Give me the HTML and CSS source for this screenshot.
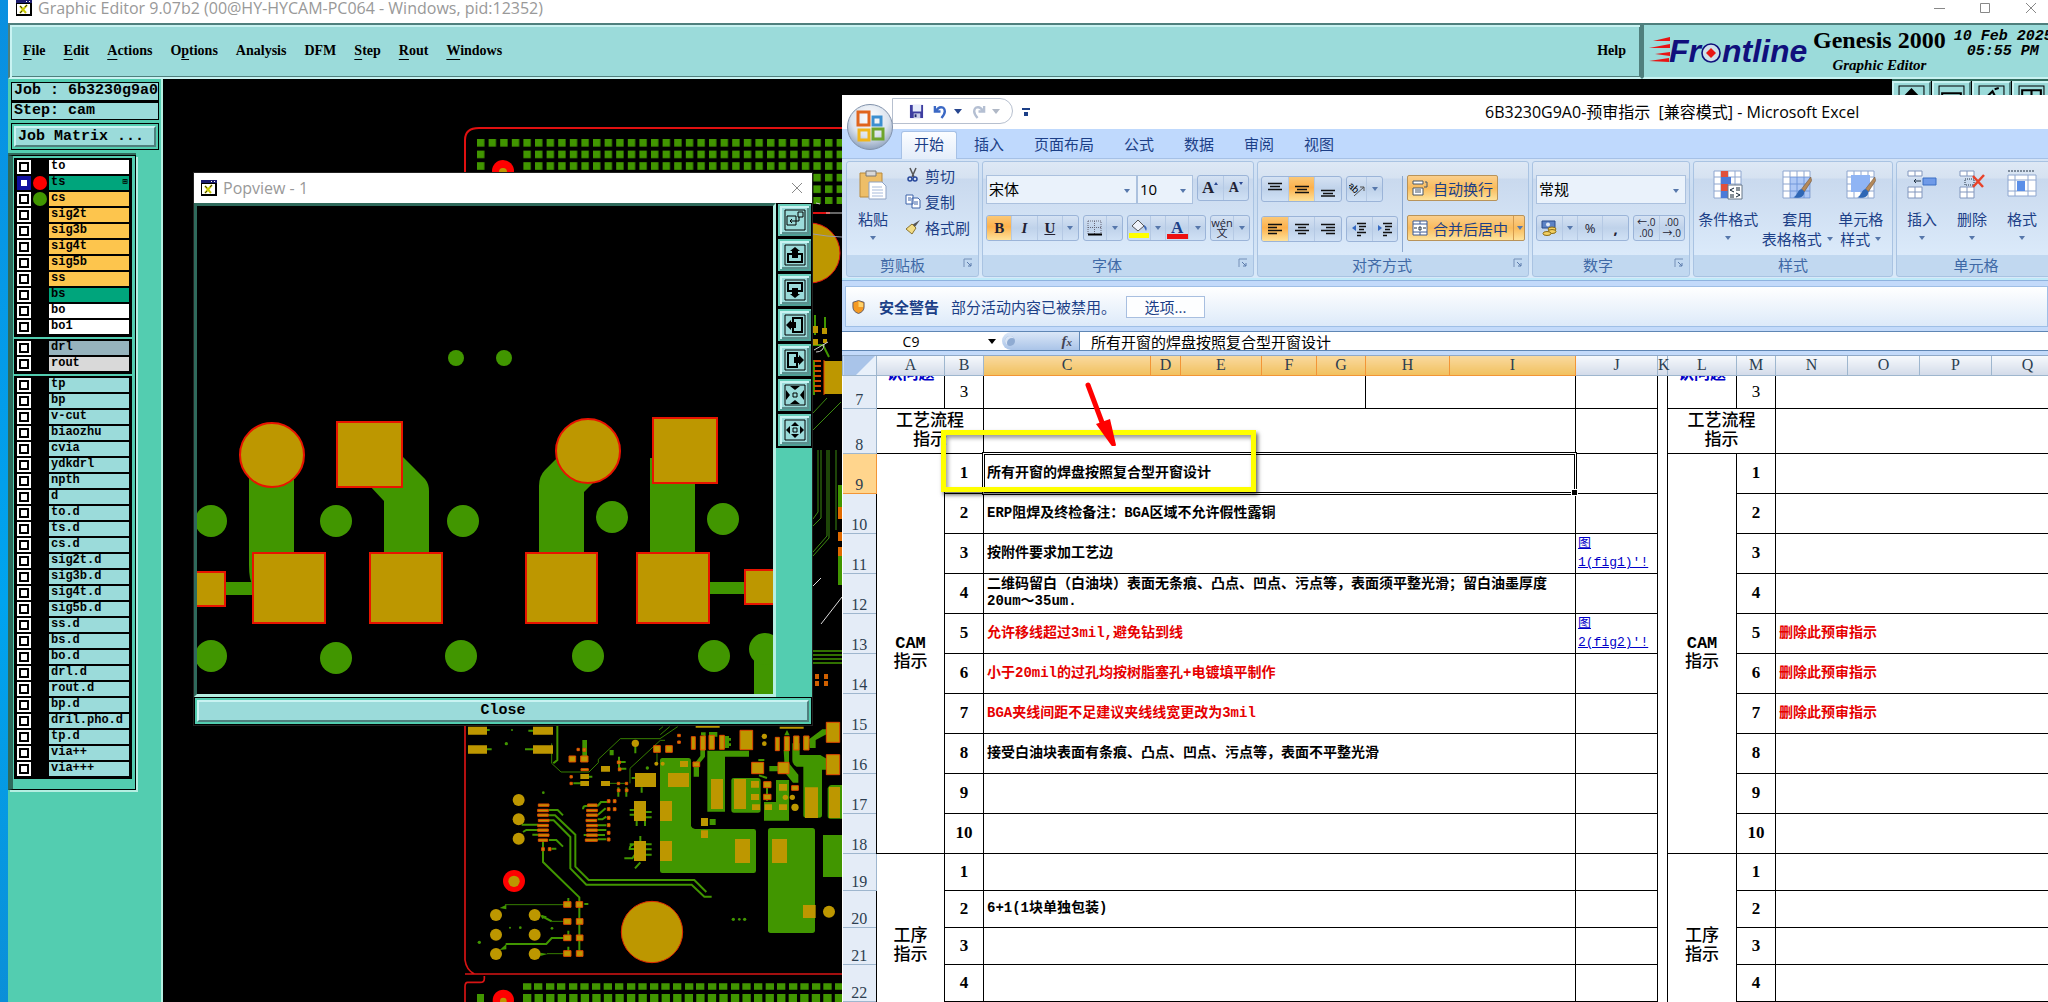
FILE: index.html
```html
<!DOCTYPE html>
<html lang="zh-CN">
<head>
<meta charset="utf-8">
<title>Graphic Editor</title>
<link rel="stylesheet" href="styles.css">
</head>
<body>
<svg class="defs" aria-hidden="true">
  <defs>
    <symbol id="xwin" viewBox="0 0 16 16"><rect width="16" height="16" fill="#000"/><rect x="1" y="4" width="13" height="10" fill="#fff"/><rect x="0" width="16" height="3" fill="#1c1c6e"/><path d="M10 1h1v1h-1zM13 1h1v1h-1z" fill="#fff"/><path d="M4 6l6 7M11 5l-7 8" stroke="#c9c900" stroke-width="2"/><path d="M4 6l2 2M11 5l-2 2M4 13l2-2" stroke="#333"/></symbol>
    <symbol id="launch" viewBox="0 0 10 10"><path d="M1 9V1h8" fill="none" stroke="#7590b8"/><path d="M4 4l4 4M8 5v3H5" fill="none" stroke="#5b7bab"/></symbol>
    <symbol id="lines-top" viewBox="0 0 16 16"><path d="M1 2.500h14M3 5.500h10M1 8.500h14" stroke="#111" stroke-width="1.500"/></symbol>
    <symbol id="lines-mid" viewBox="0 0 16 16"><path d="M1 5.500h14M3 8.500h10M1 11.500h14" stroke="#111" stroke-width="1.500"/></symbol>
    <symbol id="lines-bot" viewBox="0 0 16 16"><path d="M1 9.500h14M3 12.500h10M1 15h14" stroke="#111" stroke-width="1.500"/></symbol>
    <symbol id="al-left" viewBox="0 0 16 16"><path d="M1 3.500h14M1 6.500h9M1 9.500h14M1 12.500h9" stroke="#111" stroke-width="1.500"/></symbol>
    <symbol id="al-center" viewBox="0 0 16 16"><path d="M1 3.500h14M4 6.500h8M1 9.500h14M4 12.500h8" stroke="#111" stroke-width="1.500"/></symbol>
    <symbol id="al-right" viewBox="0 0 16 16"><path d="M1 3.500h14M6 6.500h9M1 9.500h14M6 12.500h9" stroke="#111" stroke-width="1.500"/></symbol>
    <symbol id="sheet" viewBox="0 0 30 30"><path d="M1 1h27v27H1z" fill="#fff"/><path d="M1 1h27v27H1zM1 7h27M1 14h27M1 21h27M8 1v27M15 1v27M22 1v27" fill="none" stroke="#8ea6cf"/></symbol>
    <symbol id="brush" viewBox="0 0 20 24"><path d="M19 0L9 13l3 3L20 4z" fill="#b5895a" stroke="#6d5338" stroke-width=".6"/><path d="M9 13c-5 1-4 7-9 9 6 2 12 0 12-6z" fill="#2f67b5"/></symbol>
    <pattern id="copper" width="11.600" height="11.600" patternUnits="userSpaceOnUse" x="477" y="139"><rect width="7.400" height="7.600" fill="#419600"/></pattern>
  </defs>
</svg>

<div class="desktop">
<div class="wallpaper"></div>
<main class="editor">
  <header class="wintitle">
    <svg class="ic16"><use href="#xwin"/></svg>
    <span class="caption">Graphic Editor 9.07b2 (00@HY-HYCAM-PC064 - Windows, pid:12352)</span>
    <svg class="winctl" viewBox="0 0 104 14"><path d="M0 7.500h11M46.500 2.500h9v9h-9zM92 2l10 10M102 2l-10 10" fill="none" stroke="#888"/></svg>
  </header>
  <div class="topbar">
    <nav class="menubar">
      <a href="#"><u>F</u>ile</a><a href="#"><u>E</u>dit</a><a href="#"><u>A</u>ctions</a><a href="#">O<u>p</u>tions</a><a href="#">Analysis</a><a href="#">DFM</a><a href="#"><u>S</u>tep</a><a href="#"><u>R</u>out</a><a href="#"><u>W</u>indows</a><a href="#" class="help">Help</a>
    </nav>
    <div class="brand">
      <svg class="logo" viewBox="0 0 162 32">
        <path d="M4 5l17-4v4zM0 12l21-4v4zM6 18l15-2v4zM0 25l20-3v4z" fill="#e81414"/>
        <text x="20" y="26" class="logotext">Fr</text>
        <circle cx="62" cy="17" r="9" fill="#cfe0ea" stroke="#10107c" stroke-width="1.600"/>
        <path d="M62 12l5 5-5 5-5-5z" fill="#e81414"/>
        <text x="73" y="26" class="logotext">ntline</text>
      </svg>
      <div class="product"><b>Genesis 2000</b><i>Graphic Editor</i></div>
      <div class="clock"><span>10 Feb 2025</span><span>05:55 PM</span></div>
    </div>
  </div>

  <div class="workspace">
    <aside class="side">
      <div class="field">Job : 6b3230g9a0</div>
      <div class="field">Step: cam</div>
      <div class="matrixbox"><button type="button" class="matrix">Job Matrix ...</button></div>
      <div class="layers">
        <div class="lgroup">
          <label class="layer white"><input type="checkbox"><span class="dot"></span><span class="nm">to</span></label>
          <label class="layer mask cur"><input type="checkbox"><span class="dot red"></span><span class="nm">ts<span class="mark">⊞</span></span></label>
          <label class="layer sig"><input type="checkbox"><span class="dot green"></span><span class="nm">cs</span></label>
          <label class="layer sig"><input type="checkbox"><span class="dot"></span><span class="nm">sig2t</span></label>
          <label class="layer sig"><input type="checkbox"><span class="dot"></span><span class="nm">sig3b</span></label>
          <label class="layer sig"><input type="checkbox"><span class="dot"></span><span class="nm">sig4t</span></label>
          <label class="layer sig"><input type="checkbox"><span class="dot"></span><span class="nm">sig5b</span></label>
          <label class="layer sig"><input type="checkbox"><span class="dot"></span><span class="nm">ss</span></label>
          <label class="layer mask"><input type="checkbox"><span class="dot"></span><span class="nm">bs</span></label>
          <label class="layer white"><input type="checkbox"><span class="dot"></span><span class="nm">bo</span></label>
          <label class="layer white"><input type="checkbox"><span class="dot"></span><span class="nm">bo1</span></label>
        </div>
        <div class="lgroup">
          <label class="layer drill"><input type="checkbox"><span class="dot"></span><span class="nm">drl</span></label>
          <label class="layer rout"><input type="checkbox"><span class="dot"></span><span class="nm">rout</span></label>
        </div>
        <div class="lgroup">
          <label class="layer"><input type="checkbox"><span class="dot"></span><span class="nm">tp</span></label>
          <label class="layer"><input type="checkbox"><span class="dot"></span><span class="nm">bp</span></label>
          <label class="layer"><input type="checkbox"><span class="dot"></span><span class="nm">v-cut</span></label>
          <label class="layer"><input type="checkbox"><span class="dot"></span><span class="nm">biaozhu</span></label>
          <label class="layer"><input type="checkbox"><span class="dot"></span><span class="nm">cvia</span></label>
          <label class="layer"><input type="checkbox"><span class="dot"></span><span class="nm">ydkdrl</span></label>
          <label class="layer"><input type="checkbox"><span class="dot"></span><span class="nm">npth</span></label>
          <label class="layer"><input type="checkbox"><span class="dot"></span><span class="nm">d</span></label>
          <label class="layer"><input type="checkbox"><span class="dot"></span><span class="nm">to.d</span></label>
          <label class="layer"><input type="checkbox"><span class="dot"></span><span class="nm">ts.d</span></label>
          <label class="layer"><input type="checkbox"><span class="dot"></span><span class="nm">cs.d</span></label>
          <label class="layer"><input type="checkbox"><span class="dot"></span><span class="nm">sig2t.d</span></label>
          <label class="layer"><input type="checkbox"><span class="dot"></span><span class="nm">sig3b.d</span></label>
          <label class="layer"><input type="checkbox"><span class="dot"></span><span class="nm">sig4t.d</span></label>
          <label class="layer"><input type="checkbox"><span class="dot"></span><span class="nm">sig5b.d</span></label>
          <label class="layer"><input type="checkbox"><span class="dot"></span><span class="nm">ss.d</span></label>
          <label class="layer"><input type="checkbox"><span class="dot"></span><span class="nm">bs.d</span></label>
          <label class="layer"><input type="checkbox"><span class="dot"></span><span class="nm">bo.d</span></label>
          <label class="layer"><input type="checkbox"><span class="dot"></span><span class="nm">drl.d</span></label>
          <label class="layer"><input type="checkbox"><span class="dot"></span><span class="nm">rout.d</span></label>
          <label class="layer"><input type="checkbox"><span class="dot"></span><span class="nm">bp.d</span></label>
          <label class="layer"><input type="checkbox"><span class="dot"></span><span class="nm">dril.pho.d</span></label>
          <label class="layer"><input type="checkbox"><span class="dot"></span><span class="nm">tp.d</span></label>
          <label class="layer"><input type="checkbox"><span class="dot"></span><span class="nm">via++</span></label>
          <label class="layer"><input type="checkbox"><span class="dot"></span><span class="nm">via+++</span></label>
        </div>
      </div>
    </aside>

    <section class="board">
      <svg class="pcb" viewBox="163 79 690 923">
        <path d="M465 200V140q0-12 14-12H850" fill="none" stroke="#e01010" stroke-width="2"/>
        <rect x="476" y="138" width="374" height="66" fill="url(#copper)"/>
        <rect x="487" y="149" width="34" height="60"/>
        <circle cx="503" cy="171" r="11" fill="#f00"/><circle cx="503" cy="172" r="4" fill="#bd9700"/>
        <path d="M810 213h20" stroke="#e01010" stroke-width="2"/><path d="M826 213h16M816 203l4 1" stroke="#ccc"/>
        <circle cx="810" cy="253" r="30" fill="#bd9700" stroke="#e01010"/>
        <path d="M813 234l14 2 15 1" stroke="#99a" fill="none"/>
        <path d="M815 315v20M825 317v16M813 345h10l6 12M814 360v35" stroke="#419600" stroke-width="2" fill="none"/>
        <path d="M812 326h6v7h-6zM822 328h5v6h-5zM812 339h6v6h-6zM823 339h4v4h-4zM824 361h18v33h-18z" fill="#bd9700"/>
        <path d="M824 360v35" stroke="#f04000"/><path d="M814 361h7M814 366h7M814 371h7M814 376h7M814 381h7M814 386h7M814 391h7" stroke="#d04a00" stroke-width="2"/>
        <path d="M816 352q8 0 8-8M814 350l14-8" stroke="#ccc" fill="none"/>
        <path d="M813 413l14-15M813 430l28-28M818 450v62l-5 7M821 450v68l-8 8M827 450v86l-14 16M829 450v88l-16 18M836 450v80" stroke="#3c8a10" fill="none"/>
        <path d="M838 485h4v22h-4zM838 550h4v35h-4z" fill="#419600"/><path d="M838 507h4v12h-4zM838 532h4v9h-4zM838 547h4v9h-4z" fill="#e06a00"/>
        <path d="M813 586l8-8M821 624l21-27" stroke="#ddd"/>
        <path d="M813 651h29M813 655h29M813 659h29M813 663h29" stroke="#419600" stroke-width="1.500"/>
        <path d="M815 674h4v5h-4zM824 674h4v5h-4zM815 681h4v5h-4zM824 681h4v5h-4z" fill="#d06000"/>
        <g transform="translate(455 700) scale(.33333)">
          <path d="M30 60V780q4 30 28 42M30 822H1170M30 906V860q0-13 8-13H75q13 0 13-11v-8" fill="none" stroke="#d81414" stroke-width="5"/>
          <path d="M204 850h25v19h-25zM237 850h25v19h-25zM273 850h25v19h-25zM306 850h25v19h-25zM342 850h25v19h-25zM376 850h25v19h-25zM411 850h25v19h-25zM446 850h25v19h-25zM480 850h25v19h-25zM516 850h25v19h-25zM550 850h25v19h-25zM585 850h25v19h-25zM619 850h25v19h-25zM654 850h25v19h-25zM690 850h25v19h-25zM723 850h25v19h-25zM759 850h25v19h-25zM792 850h25v19h-25zM828 850h25v19h-25zM862 850h25v19h-25zM897 850h25v19h-25zM932 850h25v19h-25zM966 850h25v19h-25zM1002 850h25v19h-25zM1036 850h25v19h-25zM1071 850h25v19h-25zM1105 850h25v19h-25zM1140 850h25v19h-25zM66 882h21v30H66z" fill="#419600"/>
          <path d="M204 894H1170" stroke="#419600" stroke-width="24" stroke-dasharray="25 9.650"/>
          <circle cx="145" cy="901" r="32" fill="#f00"/><circle cx="145" cy="903" r="10" fill="#bd9700"/>
          <g fill="#419600">
            <path d="M622 174h78q8 0 8 8V378q4 9 12 9H896q7 0 7 7V512q0 7-7 7H622q-7 0-7-7V182q0-8 7-8z"/>
            <rect x="939" y="384" width="141" height="315" rx="8"/><rect x="1104" y="405" width="58" height="126"/>
            <path d="M757 152H882v18H810V335H757zM829 240q0-6 8-6h72q8 0 8 8v88q0 8-8 8h-72q-8 0-8-8zM963 240h39V362H927V306h36zM1012 130h22v35h62l20 12v32h-15V345q0 8-8 8h-40q-8 0-8-8V200h-20q-13-6-13-20zM1118 265q4-10 12-10h32V356h-36q-8 0-8-8z"/>
            <path d="M736 150h14v20l-18 22v38h-16v-36l20-26zM986 150h16v40l28 34v24h-16l-24-30zM1062 118l40-30h18v12l-38 20v24h-18zM764 357h18v18h-18zM464 150h12v16h-12zM382 120h14v50h-14zM808 108h14v6h6v8h-6v8h6v8h-6v6h-14zM943 198h28v16h-28z"/>
            <path d="M738 105v-8h14v12zM762 96h25v14h-25zM988 106l8-16 8 16z"/>
            <path d="M134 624l20-10v14zM134 750l20-18v16zM256 645l20 4-14 8zM256 758l22 4-22 6z"/>
            <circle cx="171" cy="90" r="3"/><circle cx="154" cy="131" r="5"/><circle cx="265" cy="278" r="4"/><circle cx="577" cy="204" r="5"/><circle cx="73" cy="727" r="5"/><circle cx="165" cy="683" r="3"/><circle cx="196" cy="683" r="4"/><circle cx="291" cy="685" r="4"/><circle cx="835" cy="658" r="5"/><circle cx="853" cy="658" r="4"/><circle cx="869" cy="658" r="5"/>
          </g>
          <g fill="none" stroke="#419600" stroke-width="6">
            <path d="M307 70V180l-12 10M282 330h26l16 16M282 346h18l61 58V500l40 40H718l36 36M282 361h14l50 50v94l48 49H710l38 36h22M264 420v66l109 106V770M200 374h50M204 396l10-6h36M232 404h22M282 420h22l20 20M428 318h-36q-8 0-8 10M428 318l10-12h18M428 345l24-20M428 358h14l12-8M428 376h26M428 390h26M428 405h22M428 418h26M386 405h10"/>
            <path d="M524 344h18M572 336h18M572 352h18M524 330h18M545 360v18M570 360v18M524 433h18q-18 0-18 14h14M572 433h18M572 448h18M572 464h18M556 408v20M508 475h24l10-14M540 505l16-18M560 262v16M530 234h12M541 140v20M384 230h28M290 446h14M388 612h12M152 732H274l16-18h40M260 648l30 16M340 594v12M340 692v12M340 740v12M220 92h14M210 148h24M94 90h10M94 148h16M355 250h30M492 170v44M486 186h26M490 206h24M490 262v28M514 262v28M910 180h18M912 226l24 8M936 262v40"/>
          </g>
          <g fill="none" stroke="#419600" stroke-width="2.500">
            <path d="M290 130v60l28 26H402l28-28v-10L496 116H615L668 80M525 250V205L616 121h14M612 90l12-10M616 104l28-24M150 614H330M290 664h40M276 761h54M462 250h54M606 160v28"/>
          </g>
          <g fill="#bd9700">
            <path d="M39 80h57v24H39zM39 136h57v25H39zM234 80h60v24h-60zM234 136h60v25h-60zM722 78h72v5h-72zM974 80h72v6h-72z"/>
            <path d="M639 219h63v42h-63zM540 219h63v42h-63zM615 303h36v60h-36zM615 423h36v60h-36zM840 417h45v72h-45zM951 417h45v72h-45zM768 237h36v90h-36zM837 237h36v90h-36zM1050 262h39v92h-39zM1122 261h33v93h-33zM1044 615h38v39h-38zM537 303h36v60h-36zM537 423h36v60h-36z"/>
            <path d="M675 183h24v18h-24zM738 354h21v24h-21zM738 391h21v23h-21zM891 313h24v17h-24zM929 313h22v17h-22zM972 313h24v17h-24zM888 243h24v20h-24zM888 282h24v18h-24zM972 252h24v20h-24zM438 198h27v17h-27zM438 243h27v15h-27zM376 243h26v15h-26zM376 222h26v15h-26z"/>
            <circle cx="191" cy="300" r="18"/><circle cx="191" cy="358" r="18"/><circle cx="191" cy="416" r="18"/><circle cx="123" cy="645" r="18"/><circle cx="123" cy="704" r="18"/><circle cx="123" cy="762" r="18"/><circle cx="239" cy="645" r="18"/><circle cx="239" cy="704" r="18"/><circle cx="239" cy="762" r="18"/><circle cx="1122" cy="635" r="18"/><circle cx="541" cy="130" r="11"/><circle cx="928" cy="109" r="8"/><circle cx="928" cy="131" r="7"/><circle cx="623" cy="191" r="6"/><circle cx="604" cy="191" r="6"/><circle cx="991" cy="292" r="8"/><circle cx="1012" cy="292" r="8"/><circle cx="1020" cy="322" r="11"/>
          </g>
          <g fill="#bd9700" stroke="#e04a00" stroke-width="3">
            <path d="M855 91h38v58h-38zM1114 67h40v60h-40zM1114 164h40v60h-40zM890 187h36v34h-36zM969 187h33v34h-33zM709 110h12v38h-12zM736 108h15v42h-15zM762 106h16v42h-16zM794 106h14v42h-14zM961 112h12v40h-12zM988 110h15v42h-15zM1016 108h16v42h-16zM1046 108h16v42h-16z"/>
            <path d="M342 168h20v18h-20zM377 168h22v18h-22zM596 137h20v20h-20zM632 137h20v20h-20zM714 186h20v14h-20zM926 245h22v18h-22zM926 283h22v16h-22zM1010 257h20v14h-20z"/>
            <path d="M326 605h22v17h-22zM363 605h20v17h-20zM326 656h22v17h-22zM364 656h20v17h-20zM326 705h22v17h-22zM364 705h20v17h-20zM326 752h22v17h-22zM364 752h20v17h-20z"/>
            <path d="M250 312h32v7h-32zM248 328h32v7h-32zM248 342h32v7h-32zM250 358h32v7h-32zM248 373h32v7h-32zM248 387h32v7h-32zM250 402h32v7h-32zM250 417h28v7h-28zM398 312h28v7h-28zM395 328h32v7h-32zM395 342h32v7h-32zM393 358h32v7h-32zM395 373h32v7h-32zM395 387h32v7h-32zM395 402h32v7h-32zM391 417h36v7h-36z"/>
            <path d="M260 443h8v9h-8zM280 443h8v9h-8zM457 299h8v9h-8zM475 299h8v9h-8zM457 323h8v9h-8zM475 323h8v9h-8zM457 349h8v9h-8zM457 371h8v9h-8zM457 394h8v9h-8zM457 414h8v9h-8zM487 183h9v8h-9zM490 204h8v8h-8zM487 267h8v8h-8zM511 267h8v8h-8zM487 247h7v7h-7zM511 247h7v7h-7zM345 227h7v7h-7zM345 247h7v7h-7zM366 145h7v7h-7zM384 145h8v9h-8zM378 206h22v6h-22zM668 103h8v7h-8zM668 123h8v7h-8z"/>
          </g>
          <circle cx="177" cy="543" r="33" fill="#f00"/><circle cx="177" cy="544" r="17" fill="#bd9700"/>
          <circle cx="591" cy="696" r="92" fill="#bd9700" stroke="#e02a00" stroke-width="3"/>
        </g>
      </svg>
      <div class="tools">
        <span class="tool"><svg viewBox="0 0 26 26"><path d="M1 1h24v24H1z" fill="none" stroke="#000"/><path d="M13 3l7 7h-4v8h-6v-8H6z"/></svg></span>
        <span class="tool"><svg viewBox="0 0 26 26"><path d="M1 1h24v24H1z" fill="none" stroke="#000"/><path d="M4 8h18v12H4z" fill="none" stroke="#000" stroke-width="2"/></svg></span>
        <span class="tool"><svg viewBox="0 0 26 26"><path d="M1 1h24v24H1z" fill="none" stroke="#000"/><path d="M6 14l8-8 6 12M16 4l4-1" fill="none" stroke="#000" stroke-width="2"/></svg></span>
        <span class="tool"><svg viewBox="0 0 26 26"><path d="M1 1h24v24H1z" fill="none" stroke="#000"/><path d="M4 5h18v14H4zM13 5v14" fill="none" stroke="#000" stroke-width="2"/></svg></span>
      </div>
    </section>
  </div>
</main>

<section class="popview">
  <header class="wintitle pop">
    <svg class="ic16"><use href="#xwin"/></svg><span class="caption">Popview - 1</span>
    <svg class="x" viewBox="0 0 12 12"><path d="M1 1l10 10M11 1L1 11" stroke="#888"/></svg>
  </header>
  <div class="popbody">
    <svg class="popcanvas" viewBox="197 206 576 488">
      <g fill="#419600">
        <circle cx="456" cy="358" r="8"/><circle cx="504" cy="358" r="8"/>
        <path d="M249 470h45v90h-41v25q-4-4-4-20zM403 457l22 22q4 5 4 12v65h-45v-55l-15-16zM539 556v-70q0-10 6-16l14-14 34 27-9 9v64zM650 458h45v98h-45zM225 582h30v13h-30zM709 582h37v12h-37zM754 652h20v42h-20z"/>
        <circle cx="211" cy="521" r="16"/><circle cx="336" cy="521" r="16"/><circle cx="463" cy="521" r="16"/><circle cx="612" cy="517" r="16"/><circle cx="723" cy="519" r="16"/>
        <circle cx="211" cy="656" r="16"/><circle cx="336" cy="658" r="16"/><circle cx="461" cy="656" r="16"/><circle cx="588" cy="656" r="16"/><circle cx="714" cy="656" r="16"/><circle cx="765" cy="649" r="16"/>
      </g>
      <g fill="#bd9700" stroke="#e81400" stroke-width="2">
        <circle cx="272" cy="455" r="32"/><rect x="337" y="422" width="65" height="65"/><circle cx="588" cy="451" r="32"/><rect x="653" y="418" width="64" height="65"/>
        <rect x="253" y="553" width="72" height="70"/><rect x="370" y="553" width="72" height="70"/><rect x="526" y="553" width="71" height="70"/><rect x="637" y="553" width="72" height="70"/>
        <rect x="190" y="572" width="35" height="34"/><rect x="745" y="570" width="35" height="34"/>
      </g>
    </svg>
    <div class="poptools">
      <button type="button" aria-label="Popview"><svg viewBox="0 0 22 22"><path d="M1 1h20v20H1zM3 7h9v9H3zM14 3h5v5h-5zM15 8v4H6M8 10l-2 2 2 2" fill="none" stroke="#000"/></svg></button>
      <button type="button" aria-label="Up"><svg viewBox="0 0 22 22"><path d="M1 1h20v20H1z" fill="none" stroke="#000"/><path d="M8 10H4v8h14v-8h-4" fill="none" stroke="#000" stroke-width="2"/><path d="M11 3l5 4h-2v7H8V7H6z"/></svg></button>
      <button type="button" aria-label="Down"><svg viewBox="0 0 22 22"><path d="M1 1h20v20H1z" fill="none" stroke="#000"/><path d="M8 12H4V4h14v8h-4" fill="none" stroke="#000" stroke-width="2"/><path d="M11 19l5-4h-2V9H8v6H6z"/></svg></button>
      <button type="button" aria-label="Left"><svg viewBox="0 0 22 22"><path d="M1 1h20v20H1z" fill="none" stroke="#000"/><path d="M9 8V4h9v14H9v-4" fill="none" stroke="#000" stroke-width="2"/><path d="M2 11l5-5v2h5v6H7v2z"/></svg></button>
      <button type="button" aria-label="Right"><svg viewBox="0 0 22 22"><path d="M1 1h20v20H1z" fill="none" stroke="#000"/><path d="M13 8V4H4v14h9v-4" fill="none" stroke="#000" stroke-width="2"/><path d="M20 11l-5-5v2h-5v6h5v2z"/></svg></button>
      <button type="button" aria-label="Zoom in"><svg viewBox="0 0 22 22"><path d="M1 1h20v20H1zM9 9h4v4H9z" fill="none" stroke="#000"/><path d="M6 2h10l-5 4zM6 20h10l-5-4zM2 6v10l4-5zM20 6v10l-4-5z"/></svg></button>
      <button type="button" aria-label="Zoom out"><svg viewBox="0 0 22 22"><path d="M1 1h20v20H1zM9 9h4v4H9z" fill="none" stroke="#000"/><path d="M7 7h8l-4-4zM7 15h8l-4 4zM6 7v8l-4-4zM16 7v8l4-4z"/></svg></button>
    </div>
  </div>
  <div class="closebox"><button type="button" class="close">Close</button></div>
</section>

<section class="excel">
  <header class="xtitle">
    <div class="qat">
      <svg viewBox="0 0 16 16"><path d="M1 1h14v14H1z" fill="#3d3da0"/><path d="M4 1h9v7H4z" fill="#e6ecfa"/><path d="M5 10h7v5H5z" fill="#c8cce8"/><path d="M6 11h2v3H6z" fill="#222a70"/></svg>
      <svg viewBox="0 0 16 16"><path d="M2 2v6h6M3 8q3-6 8-4 4 4-2 11" fill="none" stroke="#3b68c4" stroke-width="2.500"/></svg><b class="tri"></b>
      <svg viewBox="0 0 16 16"><path d="M14 2v6H8M13 8Q10 2 5 4q-4 4 2 11" fill="none" stroke="#b4bfd2" stroke-width="2.500"/></svg><b class="tri dim"></b>
    </div>
    <b class="more"></b>
    <h1>6B3230G9A0-预审指示&nbsp; [兼容模式] - Microsoft Excel</h1>
  </header>
  <nav class="tabs"><a href="#" class="on">开始</a><a href="#">插入</a><a href="#">页面布局</a><a href="#">公式</a><a href="#">数据</a><a href="#">审阅</a><a href="#">视图</a></nav>
  <svg class="orb" viewBox="0 0 48 48">
    <defs><radialGradient id="og" cx=".5" cy=".3" r=".7"><stop offset="0" stop-color="#fff"/><stop offset=".6" stop-color="#dbe3ee"/><stop offset="1" stop-color="#8fa3bf"/></radialGradient></defs>
    <circle cx="24" cy="24" r="22.500" fill="url(#og)" stroke="#8192ab"/>
    <g fill="none" stroke-width="3"><path d="M12 9h11v13H12z" stroke="#e0641c"/><path d="M27 14h8v8h-8z" stroke="#3c8fd0"/><path d="M13 27h10v10H13z" stroke="#f0b51c"/><path d="M27 26h10v10H27z" stroke="#6fa52c"/></g>
  </svg>

  <div class="ribbon">
    <fieldset class="grp g-clip">
      <div class="gbody row">
        <button type="button" class="big"><svg class="i30" viewBox="0 0 30 30"><path d="M2 3h22v24H2z" fill="#edbe68" stroke="#b98a3c"/><path d="M8 1h10v5H8z" fill="#d8d8d8" stroke="#777"/><path d="M11 12h13l4 4v13H11z" fill="#fff" stroke="#8fa3c4"/><path d="M14 17h10M14 20h11M14 23h11M14 26h11" stroke="#a8bbdb"/></svg><span>粘贴</span><i class="dn"></i></button>
        <div class="col">
          <button type="button" class="sm"><svg viewBox="0 0 16 16"><path d="M5 1l4 9M11 1L7 10" stroke="#555" stroke-width="1.500"/><circle cx="5" cy="12" r="2" fill="none" stroke="#27479b" stroke-width="1.500"/><circle cx="10" cy="12" r="2" fill="none" stroke="#27479b" stroke-width="1.500"/></svg>剪切</button>
          <button type="button" class="sm"><svg viewBox="0 0 16 16"><path d="M1 2h7v9H1zM7 5h6l2 2v8H7z" fill="#fff" stroke="#3c62a8"/><path d="M3 5h3M3 7h3M9 9h4M9 11h4" stroke="#3c62a8"/></svg>复制</button>
          <button type="button" class="sm"><svg viewBox="0 0 16 16"><path d="M15 1l-5 7-3-2z" fill="#555"/><path d="M7 5l4 4-4 6-6-5z" fill="#f2dc86" stroke="#8a7430"/></svg>格式刷</button>
        </div>
      </div>
      <legend>剪贴板</legend><svg class="ln"><use href="#launch"/></svg>
    </fieldset>

    <fieldset class="grp g-font">
      <div class="gbody">
        <div class="line">
          <span class="combo w151"><select aria-label="字体"><option>宋体</option></select></span><span class="combo w55"><select aria-label="字号"><option>10</option></select></span>
          <span class="bg w52"><button type="button" class="ser f16">A<i class="up"></i></button><button type="button" class="ser f14">A<i class="up down"></i></button></span>
        </div>
        <div class="line">
          <span class="bg w93"><button type="button" class="ser on"><b>B</b></button><button type="button" class="ser"><i>I</i></button><button type="button" class="ser"><u>U</u></button><button type="button" class="ar" aria-label="下划线选项"><i class="dn"></i></button></span>
          <span class="bg w39"><button type="button" aria-label="边框"><svg class="i16" viewBox="0 0 16 16"><path d="M1 1h13v13M1 1v13M7.500 1v13M1 7.500h13" fill="none" stroke="#667" stroke-dasharray="1 1"/><path d="M1 14.500h14" stroke="#000" stroke-width="2"/></svg></button><button type="button" class="ar" aria-label="边框选项"><i class="dn"></i></button></span>
          <span class="bg w78"><button type="button" aria-label="填充颜色"><svg class="i20" viewBox="0 0 20 20"><path d="M3 8l6-6 6 6-6 5z" fill="#eef2fa" stroke="#555"/><path d="M15 7q4 2 2 6l-2-4z" fill="#3c68b8"/><path d="M0 15h20v5H0z" fill="#ff0"/></svg></button><button type="button" class="ar" aria-label="填充选项"><i class="dn"></i></button><button type="button" class="fc">A</button><button type="button" class="ar" aria-label="颜色选项"><i class="dn"></i></button></span>
          <span class="bg w39"><button type="button" class="wen"><span>wén</span><span>文</span></button><button type="button" class="ar" aria-label="拼音选项"><i class="dn"></i></button></span>
        </div>
      </div>
      <legend>字体</legend><svg class="ln"><use href="#launch"/></svg>
    </fieldset>

    <fieldset class="grp g-align">
      <div class="gbody row">
        <div class="alcol">
          <div class="line"><span class="bg w80"><button type="button" aria-label="顶端"><svg class="i16"><use href="#lines-top"/></svg></button><button type="button" class="on" aria-label="垂直居中"><svg class="i16"><use href="#lines-mid"/></svg></button><button type="button" aria-label="底端"><svg class="i16"><use href="#lines-bot"/></svg></button></span>
            <span class="bg w37"><button type="button" aria-label="方向"><svg class="i16" viewBox="0 0 16 16"><text x="-2" y="10" transform="rotate(45 4 8)" class="abt">ab</text><path d="M5 15L15 6M15 10V6h-4" fill="none" stroke="#555"/></svg></button><button type="button" class="ar" aria-label="方向选项"><i class="dn"></i></button></span></div>
          <div class="line"><span class="bg w80"><button type="button" class="on" aria-label="左对齐"><svg class="i16"><use href="#al-left"/></svg></button><button type="button" aria-label="居中"><svg class="i16"><use href="#al-center"/></svg></button><button type="button" aria-label="右对齐"><svg class="i16"><use href="#al-right"/></svg></button></span>
            <span class="bg w52"><button type="button" aria-label="减少缩进"><svg class="i16" viewBox="0 0 16 16"><path d="M6 2.500h9M8 5.500h7M8 8.500h5M6 11.500h9M6 14.500h4" stroke="#111" stroke-width="1.500"/><path d="M5 4L1 7l4 3z" fill="#3468c0"/></svg></button><button type="button" aria-label="增加缩进"><svg class="i16" viewBox="0 0 16 16"><path d="M6 2.500h9M8 5.500h7M8 8.500h5M6 11.500h9M6 14.500h4" stroke="#111" stroke-width="1.500"/><path d="M1 4l4 3-4 3z" fill="#3468c0"/></svg></button></span></div>
        </div>
        <div class="wrapcol">
          <button type="button" class="txt on w90"><svg class="i16" viewBox="0 0 16 16"><path d="M1 1h10v3H1zM1 8h10v7H1z" fill="#fff" stroke="#456"/><path d="M13 2h2v5h-3M3 10h6M3 12h6" fill="none" stroke="#456"/></svg>自动换行</button>
          <span class="txt on w117"><button type="button"><svg class="i16" viewBox="0 0 16 16"><path d="M1 1h14v14H1zM1 4h14M1 12h14M8 1v3M8 12v3" fill="#fff" stroke="#3c5a94"/><path d="M2 8h3M14 8h-3M7 7h2v3H7z" stroke="#234" fill="none"/></svg>合并后居中</button><button type="button" class="ar" aria-label="合并选项"><i class="dn"></i></button></span>
        </div>
      </div>
      <legend>对齐方式</legend><svg class="ln"><use href="#launch"/></svg>
    </fieldset>

    <fieldset class="grp g-num">
      <div class="gbody">
        <div class="line"><span class="combo w150"><select aria-label="数字格式"><option>常规</option></select></span></div>
        <div class="line"><span class="bg w93"><button type="button" aria-label="货币"><svg class="i16" viewBox="0 0 16 16"><path d="M1 1h13v7H1z" fill="#5c82c4" stroke="#2a4a8a"/><circle cx="7" cy="4.500" r="2" fill="#dfe8f8"/><ellipse cx="11" cy="9" rx="4" ry="2" fill="#f3d060" stroke="#8a6c18"/><ellipse cx="11" cy="11.500" rx="4" ry="2" fill="#f3d060" stroke="#8a6c18"/><ellipse cx="6" cy="13.500" rx="4" ry="2" fill="#f3d060" stroke="#8a6c18"/></svg></button><button type="button" class="ar" aria-label="货币选项"><i class="dn"></i></button><button type="button" class="pct">%</button><button type="button"><b>,</b></button></span>
          <span class="bg w52 dec"><button type="button">←.0<br>.00</button><button type="button">.00<br>→.0</button></span></div>
      </div>
      <legend>数字</legend><svg class="ln"><use href="#launch"/></svg>
    </fieldset>

    <fieldset class="grp g-style">
      <div class="gbody row">
        <button type="button" class="big w70"><svg class="i30" viewBox="0 0 30 30"><use href="#sheet"/><path d="M8 1h7v6H8zM8 14h7v7H8z" fill="#e0503c"/><path d="M8 7h10v7H8zM8 21h7v7H8z" fill="#4b7ad8"/><path d="M15 15h14v14H15z" fill="#fff" stroke="#678"/><path d="M21 18l-4 2 4 2M23 18h4M23 20h4M17 25h4M17 27h4M23 23l4 2-4 2" fill="none" stroke="#123"/></svg><span>条件格式</span><i class="dn"></i></button>
        <button type="button" class="big w70"><svg class="i30" viewBox="0 0 30 30"><use href="#sheet"/><path d="M8 7h20v21H8z" fill="#4b86e8" opacity=".45"/><use href="#brush" x="11" y="7" width="19" height="22"/></svg><span>套用</span><span>表格格式<i class="dn"></i></span></button>
        <button type="button" class="big w50"><svg class="i30" viewBox="0 0 30 30"><use href="#sheet"/><path d="M5 5h19v17H5z" fill="#8fb4f4"/><use href="#brush" x="11" y="7" width="19" height="22"/></svg><span>单元格</span><span>样式<i class="dn"></i></span></button>
      </div>
      <legend>样式</legend>
    </fieldset>

    <fieldset class="grp g-cell">
      <div class="gbody row">
        <button type="button" class="big w50"><svg class="i30" viewBox="0 0 30 30"><path d="M1 1h14v5H1zM8 1v5M1 17h14v11H1zM8 17v11M1 22h14" fill="#fff" stroke="#8196bd"/><path d="M16 8h13v7H16z" fill="#6f9ae8" stroke="#3a6fc4"/><path d="M14 11H7M9 9l-2 2 2 2" fill="none" stroke="#234"/></svg><span>插入</span><i class="dn"></i></button>
        <button type="button" class="big w50"><svg class="i30" viewBox="0 0 30 30"><path d="M3 1h14v5H3zM10 1v5M3 17h14v11H3zM10 17v11M3 22h14" fill="#fff" stroke="#8196bd"/><path d="M8 9h9v6H8z" fill="none" stroke="#234" stroke-dasharray="1 1"/><path d="M16 6l10 11M27 5L16 17" stroke="#e8432a" stroke-width="2.500"/></svg><span>删除</span><i class="dn"></i></button>
        <button type="button" class="big w50"><svg class="i30" viewBox="0 0 30 30"><path d="M1 5h28v21H1zM1 10h28M1 21h28M8 5v21M21 5v21" fill="#fff" stroke="#8ea6cf"/><path d="M10 11h8v10h-8z" fill="#5b8fe8"/><path d="M1 1h27" stroke="#234" stroke-dasharray="2 1"/></svg><span>格式</span><i class="dn"></i></button>
      </div>
      <legend>单元格</legend>
    </fieldset>
  </div>

  <div class="security">
    <svg viewBox="0 0 14 16"><path d="M7 1l6 2v5q0 5-6 7-6-2-6-7V3z" fill="#f59a23" stroke="#5a5a6a"/><path d="M7 2l5 2v4H7z" fill="#ffd36b"/></svg>
    <b>安全警告</b><span>部分活动内容已被禁用。</span><button type="button">选项...</button>
  </div>

  <div class="fbar">
    <span class="namebox"><input type="text" value="C9" aria-label="名称框"><i></i></span>
    <span class="fx"><i class="ball"></i><i>f<small>x</small></i></span>
    <input type="text" class="formula" value="所有开窗的焊盘按照复合型开窗设计" aria-label="编辑栏">
  </div>

  <div class="sheet">
  <table>
    <colgroup><col class="c0"><col class="cA"><col class="cB"><col class="cC"><col class="cD"><col class="cE"><col class="cF"><col class="cG"><col class="cH"><col class="cI"><col class="cJ"><col class="cK"><col class="cL"><col class="cM"><col class="cN"><col class="cN"><col class="cN"><col class="cN"></colgroup>
    <thead><tr><th class="corner"></th><th>A</th><th>B</th><th class="s">C</th><th class="s">D</th><th class="s">E</th><th class="s">F</th><th class="s">G</th><th class="s">H</th><th class="s">I</th><th>J</th><th>K</th><th>L</th><th>M</th><th>N</th><th>O</th><th>P</th><th>Q</th></tr></thead>
    <tbody>
    <tr class="r33"><th>7</th><td class="cut"><div>认问题</div></td><td class="n lt">3</td><td colspan="5"></td><td colspan="2"></td><td></td><td class="k"></td><td class="cut"><div>认问题</div></td><td class="n lt">3</td><td colspan="4"></td></tr>
    <tr class="r45"><th>8</th><td colspan="2" class="h">工艺流程<br>指示</td><td colspan="7"></td><td></td><td class="k"></td><td colspan="2" class="h">工艺流程<br>指示</td><td colspan="4"></td></tr>
    <tr class="r40"><th class="s">9</th><td rowspan="10" class="h"><b>CAM</b><br>指示</td><td class="n">1</td><td colspan="7" class="t sel">所有开窗的焊盘按照复合型开窗设计<div class="cursor"></div></td><td></td><td class="k"></td><td rowspan="10" class="h"><b>CAM</b><br>指示</td><td class="n">1</td><td colspan="4"></td></tr>
    <tr class="r40"><th>10</th><td class="n">2</td><td colspan="7" class="t">ERP阻焊及终检备注：BGA区域不允许假性露铜</td><td></td><td class="k"></td><td class="n">2</td><td colspan="4"></td></tr>
    <tr class="r40"><th>11</th><td class="n">3</td><td colspan="7" class="t">按附件要求加工艺边</td><td class="l"><a href="#">图<br>1(fig1)'!</a></td><td class="k"></td><td class="n">3</td><td colspan="4"></td></tr>
    <tr class="r40"><th>12</th><td class="n">4</td><td colspan="7" class="t">二维码留白（白油块）表面无条痕、凸点、凹点、污点等，表面须平整光滑；留白油墨厚度<br>20um～35um.</td><td></td><td class="k"></td><td class="n">4</td><td colspan="4"></td></tr>
    <tr class="r40"><th>13</th><td class="n">5</td><td colspan="7" class="t red">允许移线超过3mil,避免钻到线</td><td class="l"><a href="#">图<br>2(fig2)'!</a></td><td class="k"></td><td class="n">5</td><td colspan="4" class="t red">删除此预审指示</td></tr>
    <tr class="r40"><th>14</th><td class="n">6</td><td colspan="7" class="t red">小于20mil的过孔均按树脂塞孔+电镀填平制作</td><td></td><td class="k"></td><td class="n">6</td><td colspan="4" class="t red">删除此预审指示</td></tr>
    <tr class="r40"><th>15</th><td class="n">7</td><td colspan="7" class="t red">BGA夹线间距不足建议夹线线宽更改为3mil</td><td></td><td class="k"></td><td class="n">7</td><td colspan="4" class="t red">删除此预审指示</td></tr>
    <tr class="r40"><th>16</th><td class="n">8</td><td colspan="7" class="t">接受白油块表面有条痕、凸点、凹点、污点等，表面不平整光滑</td><td></td><td class="k"></td><td class="n">8</td><td colspan="4"></td></tr>
    <tr class="r40"><th>17</th><td class="n">9</td><td colspan="7"></td><td></td><td class="k"></td><td class="n">9</td><td colspan="4"></td></tr>
    <tr class="r40"><th>18</th><td class="n">10</td><td colspan="7"></td><td></td><td class="k"></td><td class="n">10</td><td colspan="4"></td></tr>
    <tr class="r37"><th>19</th><td rowspan="5" class="h">工序<br>指示</td><td class="n">1</td><td colspan="7"></td><td></td><td class="k"></td><td rowspan="5" class="h">工序<br>指示</td><td class="n">1</td><td colspan="4"></td></tr>
    <tr class="r37"><th>20</th><td class="n">2</td><td colspan="7" class="t">6+1(1块单独包装)</td><td></td><td class="k"></td><td class="n">2</td><td colspan="4"></td></tr>
    <tr class="r37"><th>21</th><td class="n">3</td><td colspan="7"></td><td></td><td class="k"></td><td class="n">3</td><td colspan="4"></td></tr>
    <tr class="r37"><th>22</th><td class="n">4</td><td colspan="7"></td><td></td><td class="k"></td><td class="n">4</td><td colspan="4"></td></tr>
    <tr class="r37"><th>23</th><td class="n">5</td><td colspan="7"></td><td></td><td class="k"></td><td class="n">5</td><td colspan="4"></td></tr>
    </tbody>
  </table>
  <div class="highlight"></div>
  <svg class="arrow" viewBox="0 0 34 64"><path d="M3 3l15 40" stroke="#f00" stroke-width="5" stroke-linecap="round"/><path d="M11 42l14-5 6 26q-2 4-5 0z" fill="#f00"/></svg>
  </div>
</section>
</div>
</body>
</html>
```
FILE: styles.css
```css
* { box-sizing: border-box; }
body { margin: 0; background: #000; font-family: "Noto Sans", "Noto Sans CJK SC", sans-serif; font-size: 15px; overflow: hidden; }
a { color: inherit; text-decoration: none; }
button, select, input { font: inherit; color: inherit; margin: 0; padding: 0; border: 0; background: none; border-radius: 0; }
svg { display: block; flex: none; }
.defs { position: absolute; width: 0; height: 0; }

.desktop { position: relative; display: flex; height: 100vh; overflow: hidden; }
.wallpaper { width: 8px; background: linear-gradient(#0a8fe0, #00a4ef 60%, #0b8fd8); }
.editor { flex: 1; min-width: 0; display: flex; flex-direction: column; }

/* window captions */
.wintitle { display: flex; align-items: center; height: 23px; padding: 0 10px 7px 8px; background: #fff; color: #999; }
.ic16 { width: 16px; height: 16px; }
.caption { flex: 1; margin-left: 6px; font-family: "Open Sans", sans-serif; font-size: 16px; line-height: 16px; white-space: nowrap; }
.winctl { width: 104px; height: 14px; }

/* menu bar and branding */
.topbar { display: flex; height: 56px; background: #9bdbda; }
.menubar { flex: 1; display: flex; align-items: center; gap: 18px; padding: 0 14px 0 13px; border: 2px solid #4f7f7d; box-shadow: inset 2px 2px #c9f3f2, inset -1px -1px #4f7f7d; font: bold 14px "Liberation Serif", serif; color: #000; border-bottom-color: #c9f3f2; }
.menubar u { text-underline-offset: 4px; }
.help { margin-left: auto; }
.brand { display: flex; width: 406px; border: 2px solid #4f7f7d; border-right: 0; border-bottom-color: #c9f3f2; padding: 2px 0 0 5px; overflow: hidden; color: #000; }
.logo { width: 162px; height: 32px; margin-top: 9px; }
.logotext { font: italic bold 32px "Liberation Sans", sans-serif; fill: #10107c; }
.product { display: flex; flex-direction: column; align-items: center; margin-left: 2px; width: 134px; font-family: "Liberation Serif", serif; white-space: nowrap; }
.product b { font-size: 24px; line-height: 27px; }
.product i { font-weight: bold; font-size: 15px; line-height: 22px; }
.clock { display: flex; flex-direction: column; margin: 2px 0 0 8px; font: italic bold 15px/15px "Liberation Mono", monospace; white-space: nowrap; }
.clock span + span { margin-left: 13px; }

.workspace { flex: 1; display: flex; min-height: 0; }
.side { width: 155px; padding: 3px 2px 0 3px; background: #53cdb0; border-right: 2px solid #b5efe2; font: bold 15px "Liberation Mono", monospace; color: #000; }
.field { height: 19px; line-height: 16px; padding-left: 2px; border: 1px solid #000; background: #9bdbda; white-space: nowrap; }
.field + .field { border-width: 2px 1px 1px; }
.matrixbox { margin-top: 3px; padding: 2px; border: 1px solid #000; height: 27px; }
.matrix { display: block; width: 100%; height: 21px; padding-left: 2px; line-height: 17px; text-align: left; background: #9bdbda; border: 2px solid; border-color: #c9f3f2 #4f7f7d #4f7f7d #c9f3f2; white-space: pre; }
.layers { margin: 5px 0 0 -3px; width: 128px; padding: 2px 3px 10px 1px; border: 1px solid #000; border-left: 5px solid #2f6a5c; box-shadow: 0 -2px #2f6a5c, 2px 2px #b5efe2; display: flex; flex-direction: column; gap: 2px; }
.lgroup { padding: 1px 2px 0; border: 1px solid #000; background: #000; }
.layer { display: flex; height: 16px; font-size: 12px; line-height: 13px; }
.layer input { appearance: none; width: 14px; height: 14px; background: #fff; box-shadow: inset 0 0 0 2px #fff, inset 0 0 0 4px #000; }
.layer.cur input { box-shadow: inset 0 0 0 4px #1010a0; }
.dot { width: 14px; height: 14px; margin: 0 2px; border-radius: 50%; }
.dot.red { background: #f00; }
.dot.green { background: #419600; }
.nm { flex: 1; height: 14px; padding-left: 2px; background: #9bdbda; display: flex; justify-content: space-between; }
.mark { font-size: 9px; padding-right: 1px; }
.white .nm { background: #fff; }
.mask .nm { background: #00a57c; }
.sig .nm { background: #fdc54d; }
.drill .nm { background: #96b3bd; }
.rout .nm { background: #d9d9d9; }

.board { position: relative; flex: 1; background: #000; overflow: hidden; }
.pcb { width: 690px; height: 923px; }
.tools { position: absolute; top: 0; right: 0; display: flex; gap: 1px; width: 156px; background: #000; border-top: 2px solid #2f6a5c; }
.tool { flex: none; width: 39px; height: 36px; padding: 2px 4px; background: #9bdbda; border: 2px solid; border-color: #c9f3f2 #4f7f7d #4f7f7d #c9f3f2; }

/* Popview window */
.popview { position: absolute; left: 193px; top: 172px; width: 620px; background: #53cdb0; border: 1px solid #222; }
.wintitle.pop { height: 30px; padding: 0 9px 0 7px; }
.pop .x { width: 12px; height: 12px; }
.popbody { display: flex; }
.popcanvas { width: 582px; height: 494px; background: #000; border: 3px solid; border-color: #2f6a5c #b5efe2 #b5efe2 #2f6a5c; }
.poptools { flex: 1; display: flex; flex-direction: column; }
.poptools button { height: 35px; padding: 3px 5px; background: #9bdbda; border: 2px solid #000; border-width: 1px 1px 2px 2px; box-shadow: inset 2px 2px #66cdb9, inset -2px -2px #4f9f95, inset 4px 4px #c9f3f2, inset -4px -4px #5b8f8d; }
.poptools svg { width: 22px; height: 22px; margin: 2px auto; }
.closebox { padding: 2px; border: 1px solid #000; height: 28px; }
.close { display: block; width: 100%; height: 22px; font: bold 15px/18px "Liberation Mono", monospace; background: #9bdbda; border: 2px solid; border-color: #c9f3f2 #4f7f7d #4f7f7d #c9f3f2; }

/* Excel window */
.excel { position: absolute; left: 842px; right: 0; top: 95px; bottom: 0; display: flex; flex-direction: column; background: #c3dafa; color: #1c3f87; font-family: "Open Sans", "Noto Sans CJK SC", sans-serif; overflow: hidden; }
.excel > * { flex: none; }
.xtitle { display: flex; align-items: center; height: 34px; background: #fff; }
.xtitle h1 { flex: 1; margin: 0 0 3px 455px; font-weight: 400; font-size: 16px; color: #000; white-space: nowrap; }
.qat { display: flex; align-items: center; gap: 9px; margin: -2px 0 0 50px; width: 121px; height: 26px; padding: 0 0 0 16px; border: 1px solid #b7c0cf; border-radius: 0 13px 13px 0; }
.qat svg { width: 15px; height: 15px; }
.tri { border: 4px solid transparent; border-top: 5px solid #27468f; border-bottom: 0; margin-left: -3px; }
.tri.dim { border-top-color: #b0b8c6; }
.more { width: 8px; height: 8px; margin-left: 9px; border-top: 2px solid #1c3f87; background: linear-gradient(#1c3f87, #1c3f87) center bottom / 4px 4px no-repeat; }
.tabs { display: flex; height: 30px; padding: 2px 0 0 59px; background: #bfd9fd; border-bottom: 1px solid #a6c1e6; }
.tabs a { padding: 0 15px; line-height: 27px; }
.tabs .on { padding: 0 12px; margin-right: 2px; height: 28px; border: 1px solid #a6c1e6; border-bottom: 0; border-radius: 3px 3px 0 0; background: linear-gradient(#fbfdff, #e3edfa); line-height: 25px; }
.orb { position: absolute; left: 4px; top: 8px; width: 48px; height: 48px; }

.ribbon { display: flex; gap: 3px; height: 122px; padding: 2px 0 3px 4px; background: linear-gradient(#d5e4f6, #c9dbf0 30%, #d9e9f9); border-bottom: 1px solid #8fb3de; box-shadow: inset 0 -2px #bfeaf9; overflow: hidden; }
.grp { position: relative; flex: none; display: flex; flex-direction: column; min-width: 0; margin: 0; padding: 0; border: 1px solid #a9c3e2; border-radius: 3px; background: linear-gradient(#dee8f5 0, #d6e2f1 16px, #c9d9ee 17px, #dbeafa 93px, #c1d8f0 93px); white-space: nowrap; }
.grp legend { float: left; position: absolute; left: 0; right: 0; bottom: 0; width: 100%; padding: 0; text-align: center; line-height: 22px; color: #3f69a6; }
.ln { position: absolute; right: 5px; bottom: 8px; width: 10px; height: 10px; }
.g-clip { width: 133px; } .g-clip legend { padding-right: 20px; }
.g-font { width: 272px; } .g-font legend { padding-right: 22px; }
.g-align { width: 272px; } .g-align legend { padding-right: 22px; }
.g-num { width: 158px; } .g-num legend { padding-right: 26px; }
.g-style { width: 200px; }
.g-cell { width: 160px; }
.gbody { height: 93px; padding: 13px 3px 0; }
.gbody.row { display: flex; padding-top: 8px; }
.line { display: flex; align-items: flex-start; gap: 4px; height: 40px; }
.big { display: flex; flex-direction: column; align-items: center; width: 52px; line-height: 20px; }
.big svg { margin-bottom: 9px; }
.big > .dn { margin-top: 7px; }
.big span { display: flex; align-items: center; gap: 5px; }
.i30 { width: 30px; height: 30px; } .i20 { width: 20px; height: 20px; } .i16 { width: 16px; height: 16px; }
.dn { display: inline-block; border: 3px solid transparent; border-top: 4px solid #5677ab; border-bottom: 0; }
.g-clip .row { padding-left: 0; }
.col { display: flex; flex-direction: column; margin-top: -8px; padding-left: 6px; }
.sm { display: flex; align-items: center; gap: 4px; height: 26px; }
.sm svg { width: 16px; height: 16px; }
.combo { position: relative; height: 29px; border: 1px solid #abc1de; background: #eaf2fb; }
.combo select { appearance: none; width: 100%; height: 26px; padding-left: 2px; color: #000; line-height: 26px; }
.combo::after { content: ""; position: absolute; right: 6px; top: 13px; border: 3px solid transparent; border-top: 4px solid #5677ab; border-bottom: 0; }
.combo + .combo { margin-left: -4px; }
.bg { display: flex; height: 26px; border: 1px solid #9bb4d8; border-radius: 3px; background: linear-gradient(#d5e2f3, #bfd2ea 50%, #d0e1f5); overflow: hidden; color: #223; }
.bg button { flex: 1; display: flex; align-items: center; justify-content: center; min-width: 0; border-right: 1px solid #b5c9e4; }
.bg button:last-child { border: 0; }
.bg .ar { flex: none; width: 15px; }
.bg .on { background: linear-gradient(#fbc877, #fdb14c 45%, #fee29a); }
.bg .ser { font-family: "Liberation Serif", serif; font-weight: bold; font-size: 15px; }
.up { align-self: flex-start; margin-top: 6px; border: 2px solid transparent; border-bottom: 3px solid #2a4a94; border-top: 0; }
.down { border-top: 3px solid #2a4a94; border-bottom: 0; }
.bg .f16 { font-size: 17px; } .bg .f14 { font-size: 14px; }
.bg .fc { font: bold 17px/17px "Liberation Serif", serif; color: #1c3f87; box-shadow: inset 0 -5px #e11; margin: 0 1px 1px; }
.bg .wen { flex-direction: column; font-size: 11px; line-height: 10px; }
.abt { font: 10px "Liberation Sans", sans-serif; }
.bg .pct { font-size: 13px; }
.dec button { font-size: 10px; line-height: 11px; }
.w151 { width: 151px; } .w55 { width: 56px; } .w52 { width: 52px; } .w93 { width: 93px; } .w39 { width: 40px; } .w78 { width: 79px; } .w80 { width: 81px; } .w37 { width: 37px; } .w90 { width: 91px; } .w117 { width: 118px; } .w150 { width: 150px; } .w70 { width: 70px; } .w50 { width: 50px; }
.g-style .row, .g-cell .row { padding-left: 0; }
.g-style .w50 { width: 58px; }
.alcol { width: 142px; margin-top: 6px; border-right: 1px solid #8ca9d0; height: 76px; }
.wrapcol { display: flex; flex-direction: column; gap: 14px; padding: 5px 0 0 4px; }
.txt { display: flex; align-items: center; gap: 5px; height: 26px; padding: 0 4px; border: 1px solid #b8935a; border-radius: 2px; background: linear-gradient(#fbcf8c, #f9bb5c 50%, #fee39b); color: #1c3f87; }
.txt button { display: flex; align-items: center; gap: 5px; height: 24px; }
.txt .ar { padding-left: 3px; border-left: 1px solid #d39a4e; }

.security { display: flex; align-items: center; height: 41px; margin: 5px 0 4px 3px; padding-left: 6px; border: 1px solid #9fbfe6; background: linear-gradient(#fff, #ddeaf9); }
.security svg { width: 13px; height: 16px; }
.security b { margin: 0 12px 0 14px; }
.security span { width: 175px; white-space: nowrap; }
.security button { width: 79px; height: 22px; border: 1px solid #a8bfe0; background: #fdfeff; line-height: 20px; }

.fbar { display: flex; height: 20px; border: 1px solid #5f86b4; border-width: 1px 0; background: #fff; color: #000; }
.namebox { display: flex; align-items: center; width: 160px; }
.namebox input { width: 138px; text-align: center; font-size: 14px; margin-right: 8px; }
.namebox i { border: 4px solid transparent; border-top: 5px solid #000; border-bottom: 0; }
.fx { display: flex; align-items: center; justify-content: space-between; width: 78px; padding: 0 7px 0 3px; border-radius: 9px 0 0 9px; background: linear-gradient(#dbe7f7, #aac4e8); border-right: 1px solid #5f86b4; font: bold italic 15px "Liberation Serif", serif; color: #445; }
.fx small { font-size: 11px; }
.ball { width: 10px; height: 10px; border-radius: 50%; background: #8fabd2; box-shadow: inset 2px 2px #d8e4f5; }
.formula { flex: 1; padding-left: 11px; }

.sheet { position: relative; margin-top: 4px; border-top: 1px solid #8fa9c8; background: #fff; color: #000; }
table { table-layout: fixed; width: 1221px; border-collapse: collapse; }
.c0 { width: 34px; } .cA { width: 68px; } .cB { width: 39px; } .cC { width: 167px; } .cD { width: 30px; } .cE { width: 81px; } .cF { width: 55px; } .cG { width: 49px; } .cH { width: 84px; } .cI { width: 126px; } .cJ { width: 82px; } .cK { width: 10px; } .cL { width: 69px; } .cM { width: 39px; } .cN { width: 72px; }
thead tr { height: 19px; }
thead th { padding: 0; background: linear-gradient(#f6f9fc, #d3dbe9); border: 1px solid #9eb6ce; border-top: 0; line-height: 18px; }
th { font: 16px "Liberation Serif", serif; color: #2c3e50; }
thead .s { background: linear-gradient(#f9d99f, #f1c15f); border-color: #f29536; }
.corner { background: linear-gradient(135deg, #a9c4e9 60%, #e8f0fa 60%) !important; }
tbody th { padding: 0; vertical-align: bottom; line-height: 17px; background: #e4ecf7; border: 1px solid #9eb6ce; border-left: 0; }
tbody th.s { background: #ffd58d; border-color: #f29536; }
td { padding: 0; border: 1px solid #000; font-family: "Liberation Mono", "Noto Sans CJK SC", monospace; }
td.k { border-top-color: #fff; border-bottom-color: #fff; border-width: 0 1px; }
.n { text-align: center; font: bold 17px "Liberation Serif", serif; }
.n.lt { font-weight: 400; }
.h { text-align: center; font-size: 17px; line-height: 19px; font-weight: 500; }
.t { padding-left: 3px; font-size: 14px; font-weight: bold; line-height: 17px; white-space: nowrap; }
.red { color: #e60000; }
.l { padding-left: 2px; font-size: 13px; line-height: 19px; color: #0000c8; }
.l a { text-decoration: underline; }
.cut { vertical-align: top; text-align: center; color: #0000c8; font-size: 16px; font-weight: bold; }
.cut div { height: 6px; line-height: 14px; display: flex; align-items: flex-end; justify-content: center; overflow: hidden; }
.r33 { height: 33px; } .r45 { height: 45px; } .r40 { height: 40px; } .r37 { height: 37px; }
.sel { position: relative; }
.cursor { position: absolute; inset: -2px; border: 1px solid #000; box-shadow: inset 0 0 0 1px #fff, inset 0 0 0 2px #000; }
.cursor::after { content: ""; position: absolute; right: -2px; bottom: -2px; width: 5px; height: 5px; background: #000; border: 1px solid #fff; }
.highlight { position: absolute; left: 99px; top: 74px; width: 315px; height: 62px; border: 5px solid #ffff00; box-shadow: 2px 3px 4px rgba(0, 0, 0, .6), inset 2px 3px 4px rgba(0, 0, 0, .4); }
.arrow { position: absolute; left: 243px; top: 26px; width: 34px; height: 64px; }
```
